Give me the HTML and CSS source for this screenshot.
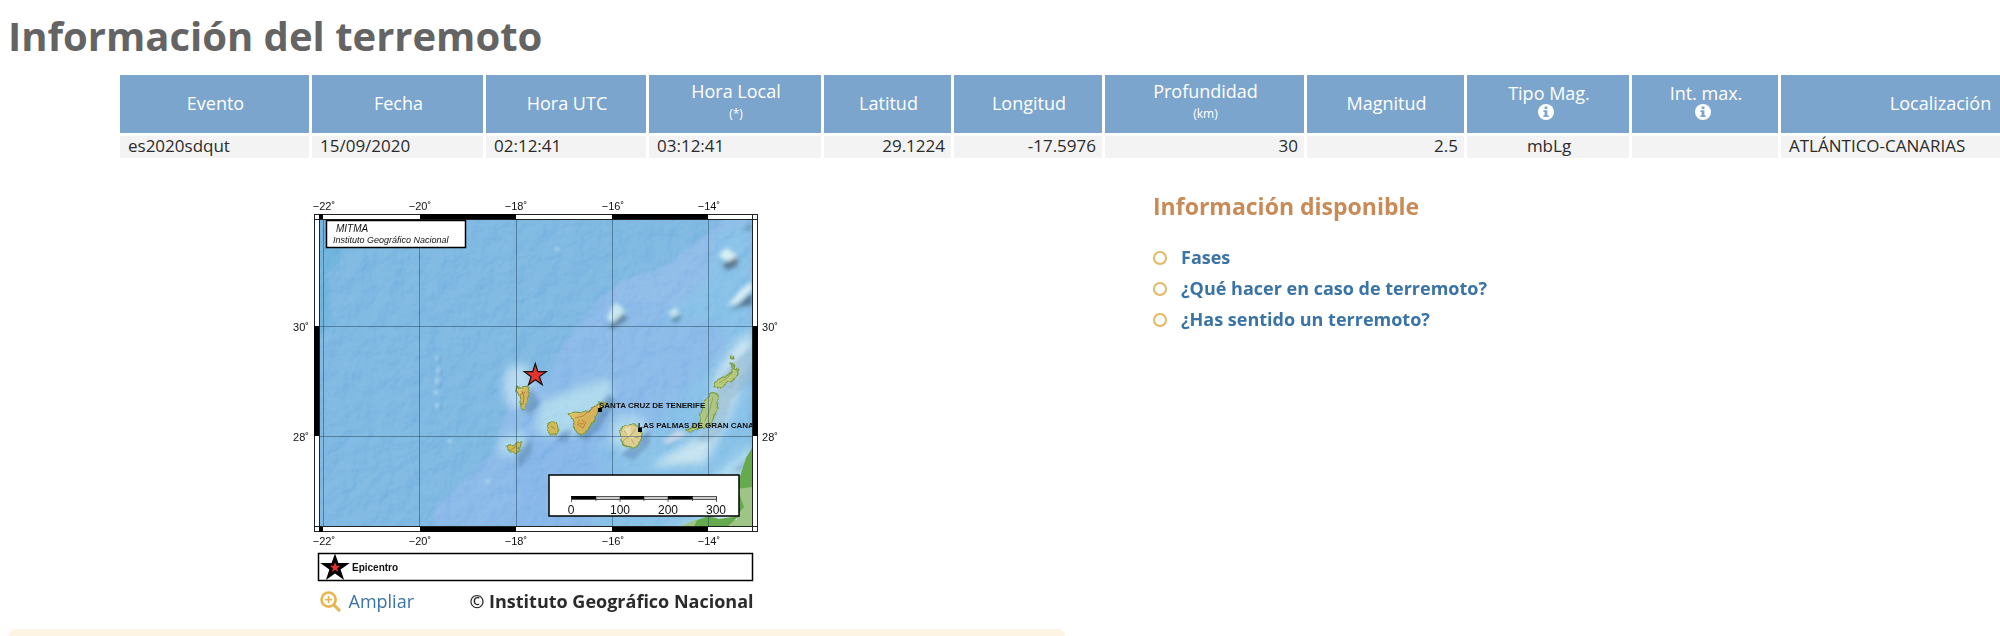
FILE: index.html
```html
<!DOCTYPE html>
<html lang="es">
<head>
<meta charset="utf-8">
<meta name="viewport" content="width=device-width, initial-scale=1">
<title>Información del terremoto</title>
<link rel="stylesheet" href="styles.css">
</head>
<body>
<main class="page">
  <h1 class="page-title">Información del terremoto</h1>

  <div class="event-wrap">
    <table class="event">
      <colgroup>
        <col class="w-event"><col class="w-date"><col class="w-utc"><col class="w-local"><col class="w-lat"><col class="w-lon">
        <col class="w-depth"><col class="w-mag"><col class="w-type"><col class="w-int"><col class="w-place">
      </colgroup>
      <thead>
        <tr>
          <th scope="col">Evento</th>
          <th scope="col">Fecha</th>
          <th scope="col">Hora UTC</th>
          <th scope="col">Hora Local<small class="unit">(*)</small></th>
          <th scope="col">Latitud</th>
          <th scope="col">Longitud</th>
          <th scope="col">Profundidad<small class="unit">(km)</small></th>
          <th scope="col">Magnitud</th>
          <th scope="col">Tipo Mag.
            <a class="info" href="#tipo-magnitud" aria-label="Información sobre el tipo de magnitud"><svg viewBox="0 0 16 16" aria-hidden="true"><circle cx="8" cy="8" r="8" fill="#fff"/><path d="M6.6 2.6h2.8v2.3H6.6zM5.4 6.2h4v5h1.2v1.9H5.4v-1.9h1.2V8.1H5.4z" fill="#7ca5ce"/></svg></a></th>
          <th scope="col">Int. max.
            <a class="info" href="#intensidad" aria-label="Información sobre la intensidad máxima"><svg viewBox="0 0 16 16" aria-hidden="true"><circle cx="8" cy="8" r="8" fill="#fff"/><path d="M6.6 2.6h2.8v2.3H6.6zM5.4 6.2h4v5h1.2v1.9H5.4v-1.9h1.2V8.1H5.4z" fill="#7ca5ce"/></svg></a></th>
          <th scope="col">Localización</th>
        </tr>
      </thead>
      <tbody>
        <tr>
          <td>es2020sdqut</td>
          <td>15/09/2020</td>
          <td>02:12:41</td>
          <td>03:12:41</td>
          <td class="num">29.1224</td>
          <td class="num">-17.5976</td>
          <td class="num">30</td>
          <td class="num">2.5</td>
          <td class="mid">mbLg</td>
          <td></td>
          <td>ATLÁNTICO-CANARIAS</td>
        </tr>
      </tbody>
    </table>
  </div>

  <div class="columns">
    <section class="map-column">
      <figure class="map">
        <svg class="map-image" viewBox="282 194 510 390" role="img" aria-label="Mapa del epicentro, islas Canarias">
          <defs>
            <clipPath id="sea"><rect x="319" y="219" width="433" height="308"/></clipPath>
            <filter id="soft1" x="-50%" y="-50%" width="200%" height="200%"><feGaussianBlur stdDeviation="1.6"/></filter>
            <filter id="soft2" x="-50%" y="-50%" width="200%" height="200%"><feGaussianBlur stdDeviation="2.2"/></filter>
            <filter id="soft3" x="-50%" y="-50%" width="200%" height="200%"><feGaussianBlur stdDeviation="5"/></filter>
            <filter id="soft8" x="-50%" y="-50%" width="200%" height="200%"><feGaussianBlur stdDeviation="9"/></filter>
            <filter id="coast" x="-10%" y="-10%" width="120%" height="120%">
              <feTurbulence type="fractalNoise" baseFrequency="0.16" numOctaves="2" seed="9" result="n"/>
              <feDisplacementMap in="SourceGraphic" in2="n" scale="4" xChannelSelector="R" yChannelSelector="G"/>
            </filter>
            <filter id="relief" x="0" y="0" width="100%" height="100%">
              <feTurbulence type="fractalNoise" baseFrequency="0.06" numOctaves="3" seed="4" result="n"/>
              <feDiffuseLighting in="n" surfaceScale="4" diffuseConstant="0.75" lighting-color="#fff"><feDistantLight azimuth="225" elevation="45"/></feDiffuseLighting>
            </filter>
            <linearGradient id="isle" x1="0" y1="0" x2="1" y2="1"><stop offset="0" stop-color="#e4d478"/><stop offset=".5" stop-color="#d8b158"/><stop offset="1" stop-color="#b9c774"/></linearGradient>
          </defs>

          <g clip-path="url(#sea)">
            <rect x="319" y="219" width="433" height="308" fill="#78b4e0"/>
            <path d="M319 219h20l4 34-5 12-12 10 6 12-3 18 4 14-14 20z" fill="#6ab0dd" filter="url(#soft1)"/>
            <path d="M752 219h-28l-20 18-46 34-32 8-26 19-22 24-18 28-10 26-36 10-13 40-8 28-34 32-22 20-3 20h312z" fill="#85b6e7" filter="url(#soft1)"/>
            <path d="M725 219l-15 15-50 35-33 9-22 20 95 10 40-50 12-39z" fill="#8bb9e8" opacity=".7" filter="url(#soft1)"/>
            <path d="M752 222l-34 8-12 52-28 25-16 18 40-6 22 12 4 18-44 42-30 38-60 18v90h158z" fill="#80c0e6" opacity=".75" filter="url(#soft3)"/>
            <path d="M556 410l60 60-42 57h-60l4-60z" fill="#7fb0e8" opacity=".6" filter="url(#soft8)"/>
            <g filter="url(#soft3)">
              <path d="M508 366l18-2 10 22-8 24-18-2-8-22z" fill="#b2d8f0"/>
              <path d="M540 402l42-16 28-8 4 20-22 22-18 18-24-12-16 6z" fill="#a9d6ec"/>
              <path d="M500 438l22-8 6 14-12 12-16 0z" fill="#a9d6ec"/>
              <ellipse cx="552" cy="426" rx="16" ry="11" fill="#a9d6ec"/>
              <circle cx="630" cy="434" r="20" fill="#a9d4ee"/>
              <path d="M684 446l22-14 8-54 20-34 18-12v30l-24 58-24 44-58 2z" fill="#c4e2f0"/>
              <path d="M678 494l34-18 40-32v16l-34 34z" fill="#a9d8ee"/>
              <path d="M704 520l48-60v67h-90z" fill="#c2e0e8"/>
            </g>
            <g filter="url(#soft2)">
              <path d="M738 358l14-12v32l-20 22-10 30-12 12-14 0 14-22 8-40z" fill="#7aa6c4" opacity=".5"/>
              <path d="M532 386l8 18-9 10-12-4z" fill="#4f7eae" opacity=".6"/>
              <path d="M594 416l14-22 8 6-16 28-14 12-10-4z" fill="#4f7eae" opacity=".6"/>
              <path d="M516 456l16-18 0 14-12 16z" fill="#4f7eae" opacity=".6"/>
              <path d="M642 434l9-4-2 16-16 14-12-5z" fill="#4f7eae" opacity=".55"/>
              <path d="M560 434l12-6-4 12-12 2z" fill="#4f7eae" opacity=".5"/>
              <path d="M662 442l16-12 10 4-20 10z" fill="#d0d8e8" opacity=".9"/>
              <path d="M606 318l9-16 8 6 2 8-10 8z" fill="#c4e6ee"/>
              <path d="M608 327l16-14 3 6-14 10z" fill="#4c748f" opacity=".9"/>
              <path d="M668 312l8-5 4 8-6 3z" fill="#c4e6ee"/>
              <path d="M672 319l9-6-1 7-6 2z" fill="#46789c"/>
              <path d="M718 256l8-8 12 8-8 6z" fill="#d8eff4"/>
              <path d="M722 265l16-9-1 10-10 4z" fill="#4e6b82"/>
              <path d="M727 306l14-16 11-9v8l-14 14z" fill="#d9edf2"/>
              <path d="M730 311l22-18v12l-12 2z" fill="#4c7190"/>
              <path d="M742 231l10-10v9z" fill="#4f7ea4" opacity=".6"/>
              <path d="M735 468l17-11v7l-16 9z" fill="#86a9c8" opacity=".8"/>
            </g>
            <g filter="url(#soft1)">
              <path d="M437 356v4M438 368v5M437 378v6M436 390v5M437 403v5M485 481l5 1M448 440l3 2M555 248l4 2" stroke="#9fcbec" stroke-width="4"/>
              <path d="M440 356v8M441 370v6M440 382v6M440 405v4" stroke="#5f9dce" stroke-width="2"/>
            </g>
            <rect x="319" y="219" width="433" height="308" filter="url(#relief)" opacity=".3" style="mix-blend-mode:soft-light"/>

            <path d="M752 448l-6 10-8 29-1 33-42 0-16 7h73z" fill="#9ec486"/>
            <path d="M752 448l-6 10-10 31 16-2zM739 493l5 14-10 12zM694 527l3-7 12-4 10 3 20-3-12 11z" fill="#66aa4e"/>
            <g stroke="#7d9c45" stroke-width="1.200" stroke-linejoin="round" filter="url(#coast)">
              <path d="M516 390q1-4 6-3q6-2 7 3q1 6-2 10q-1 7-3 10q-4-2-4-9q0-5-4-11z" fill="url(#isle)"/>
              <path d="M568 414q6-3 14-1q10-2 13-7q5-5 12-4q-2 5-9 9q-2 8-6 13q-4 8-12 11q-5-3-6-10q-2-8-6-11z" fill="url(#isle)"/>
              <circle cx="553" cy="428" r="6" fill="#cfba55"/>
              <path d="M507 447q4-2 7-1q3-5 7-4q0 6-4 10q-2 3-5 0q-4 0-5-5z" fill="#d5bb4e"/>
              <path d="M621 429q5-6 14-4q7 3 7 10q-1 8-6 12q-6 3-12-2q-5-6-3-16z" fill="#dccd90"/>
              <path d="M709 394q5-3 9 1q1 14-6 26q-5 8-11 6q-7 6-16 3q9-3 15-8q1-17 9-28z" fill="#aec683"/>
              <path d="M715 388q-1-8 7-11q8-1 11-9q5-1 5 6q-3 7-11 9q-5 5-12 5z" fill="#b7c878"/>
              <path d="M730 363h4l1 4h-4zM730 356h3l1 3h-3z" fill="#8fae55"/>
            </g>
            <g fill="none" stroke="#a96c26" stroke-width="1" opacity=".7">
              <path d="M522 391l2 6-1 8M520 395l5-3M575 418l8-2 6-5 6-5M577 424l6 4 3-6M580 420a3 2 0 1 0 2 0M551 426l4 3M511 450l6-4"/>
              <path d="M624 431l6 5 6-7M630 436l-6 4M630 436l4 8M631 436l8 2" stroke="#b09a5c"/>
              <path d="M713 397l-3 12-5 12M719 383l8-5 6-6" stroke="#7f9c54"/>
            </g>
            <path d="M629 437l-5-8 7-3-1 10 7-1-5 4z" fill="#f1e6c1" opacity=".7"/>
            <path d="M323.500 219v308M419.500 219v308M516.500 219v308M612.500 219v308M708.500 219v308M319 326.500h433M319 436.500h433" stroke="#24435c" stroke-opacity=".5" stroke-width="1"/>
            <path d="M598 408h4v4h-4zM638 428h4v4h-4z"/>
            <text class="city" x="599" y="408">SANTA CRUZ DE TENERIFE</text>
            <text class="city" x="638" y="428">LAS PALMAS DE GRAN CANA</text>
          </g>

          <g fill="none" stroke="#222" stroke-width="1">
            <rect x="314.500" y="214.500" width="443" height="317"/>
            <rect x="319.500" y="219.500" width="433" height="307"/>
            <path d="M314 219.500h5M319.500 214v5M752 219.500h5M752.500 214v5M314 526.500h5M319.500 526v5M752 526.500h5M752.500 526v5"/>
          </g>
          <path d="M319 214h4v5h-4zM420 214h96v5h-96zM612 214h96v5h-96zM319 527h4v5h-4zM420 527h96v5h-96zM612 527h96v5h-96zM314 326h5v110h-5zM753 326h5v110h-5z"/>

          <g class="axis middle">
            <text x="324" y="210">−22˚</text><text x="420" y="210">−20˚</text><text x="516" y="210">−18˚</text><text x="613" y="210">−16˚</text><text x="709" y="210">−14˚</text>
            <text x="324" y="545">−22˚</text><text x="420" y="545">−20˚</text><text x="516" y="545">−18˚</text><text x="613" y="545">−16˚</text><text x="709" y="545">−14˚</text>
            <text x="301" y="331">30˚</text><text x="301" y="441">28˚</text><text x="770" y="331">30˚</text><text x="770" y="441">28˚</text>
          </g>

          <rect x="326.500" y="220.500" width="139" height="27" fill="#fff" stroke="#000" stroke-width="1.500"/>
          <text class="agency" x="336" y="232">MITMA</text>
          <text class="institute" x="333" y="243">Instituto Geográfico Nacional</text>

          <path d="M535.300 363.500l2.500 8.200 8.500-.1-6.900 5 2.800 8-6.900-4.800-6.800 5 2.600-8.100-6.800-5 8.400-.1z" fill="#e5322a" stroke="#111" stroke-width="1.200"/>

          <rect x="549" y="475" width="190" height="41" fill="#fff" stroke="#000" stroke-width="1.500"/>
          <rect x="571.500" y="496.500" width="145" height="3" fill="#ccc" stroke="#333" stroke-width=".8"/>
          <path d="M571 496h25v3h-25zM620 496h24v3h-24zM668 496h25v3h-25z"/>
          <path d="M571.500 497v5M596 497v4M620 497v5M644 497v4M668 497v5M692.500 497v4M716.500 497v5" stroke="#333" stroke-width=".8"/>
          <g class="scale middle"><text x="571" y="514">0</text><text x="620" y="514">100</text><text x="668" y="514">200</text><text x="716" y="514">300</text></g>

          <rect x="318.500" y="553.500" width="434" height="27" fill="#fff" stroke="#000" stroke-width="1.500"/>
          <path d="M335 553.500l3.400 9.500 11.400 0-9.200 6.400 3.500 10.600-9.100-6.400-9.100 6.400 3.500-10.600-9.200-6.400 11.400 0z"/>
          <path d="M335 562l1.300 3.700 4 .1-3.200 2.400 1.100 3.800-3.200-2.200-3.200 2.200 1.100-3.800-3.200-2.400 4-.1z" fill="#e5322a"/>
          <text class="legend" x="352" y="571">Epicentro</text>
        </svg>
        <figcaption class="map-caption">
          <a class="enlarge" href="#ampliar"><svg viewBox="0 0 22 22" aria-hidden="true"><g fill="none" stroke="#e9b550" stroke-linecap="round"><circle cx="9" cy="9" r="7.400" stroke-width="2.800"/><path d="M15 15l5 5" stroke-width="3.200"/><path d="M9 6v6M6 9h6" stroke-width="1.800"/></g></svg>Ampliar</a>
          <strong>© Instituto Geográfico Nacional</strong>
        </figcaption>
      </figure>
      <div class="notice"></div>
    </section>

    <section class="available">
      <h2 class="available-title">Información disponible</h2>
      <ul class="links">
        <li><a href="#fases">Fases</a></li>
        <li><a href="#que-hacer">¿Qué hacer en caso de terremoto?</a></li>
        <li><a href="#has-sentido">¿Has sentido un terremoto?</a></li>
      </ul>
    </section>
  </div>
</main>
</body>
</html>
```
FILE: styles.css
```css
*, *::before { box-sizing: border-box; }

body {
  margin: 0;
  background: #fff;
  color: #2b2b2b;
  font: 18px/24px "Open Sans", "Noto Sans", sans-serif;
}

a { color: #3a73a6; text-decoration: none; }
.page {
  height: 100vh;
  padding: 14px 0 0 8px;
  overflow: hidden;
}
.page-title {
  margin: 0 0 14px;
  color: #646464;
  font-size: 40px;
  line-height: 44px;
  font-weight: 700;
}

/* Event table */
.event-wrap { padding-left: 109px; overflow: hidden; }
.event {
  width: 1984px;
  table-layout: fixed;
  border-collapse: separate;
  border-spacing: 3px;
}
.w-event { width: 189px; }
.w-date { width: 171px; }
.w-utc { width: 160px; }
.w-local { width: 172px; }
.w-lat { width: 127px; }
.w-lon { width: 148px; }
.w-depth { width: 199px; }
.w-mag { width: 157px; }
.w-type { width: 162px; }
.w-int { width: 146px; }
.event th {
  height: 58px;
  padding: 0 6px 2px 8px;
  background: #7ca5ce;
  color: #fff;
  font-weight: 400;
  line-height: 22px;
  vertical-align: middle;
}
.event td {
  height: 22px;
  padding: 0 6px 2px 8px;
  background: #f3f3f3;
  font-size: 17px;
  line-height: 20px;
}
.event .num { text-align: right; }
.event .mid { text-align: center; }
.unit { display: block; font-size: 12px; line-height: 24px; }
.info { display: block; height: 20px; margin-right: 6px; line-height: 0; }
.info svg { width: 16px; height: 16px; }

/* Map and links */
.columns {
  display: grid;
  grid-template-columns: 1057fr 847fr;
  column-gap: 88px;
  padding-top: 33px;
}
.map { margin: 0; }
.map-image { display: block; width: 510px; max-width: 100%; margin: 0 auto; }
.map-image text { font-family: "Liberation Sans", Arial, sans-serif; fill: #111; }
.middle { text-anchor: middle; }
.axis { font-size: 11px; }
.scale { font-size: 12px; }
.agency { font-size: 10px; font-style: italic; }
.institute { font-size: 9px; font-style: italic; }
.city { font-size: 8px; font-weight: 700; }
.legend { font-size: 10px; font-weight: 700; }
.map-caption {
  display: flex;
  justify-content: space-between;
  align-items: center;
  width: 434px;
  max-width: 100%;
  margin: 4px auto 0;
  line-height: 26px;
}
.enlarge { display: flex; align-items: center; gap: 8px; }
.enlarge svg { width: 21px; height: 21px; }
.notice {
  height: 40px;
  margin-top: 15px;
  background: #fdf4e3;
  border-radius: 8px;
}
.available-title {
  margin: 0;
  color: #c98a55;
  font-size: 23px;
  line-height: 24px;
  font-weight: 700;
}
.links { margin: 24px 0 0; padding: 0; list-style: none; }
.links li {
  display: flex;
  align-items: center;
  gap: 14px;
  line-height: 31px;
  font-weight: 700;
}
.links li::before {
  content: "";
  width: 14px;
  height: 14px;
  border: 2px solid #e3b764;
  border-radius: 50%;
}
```
